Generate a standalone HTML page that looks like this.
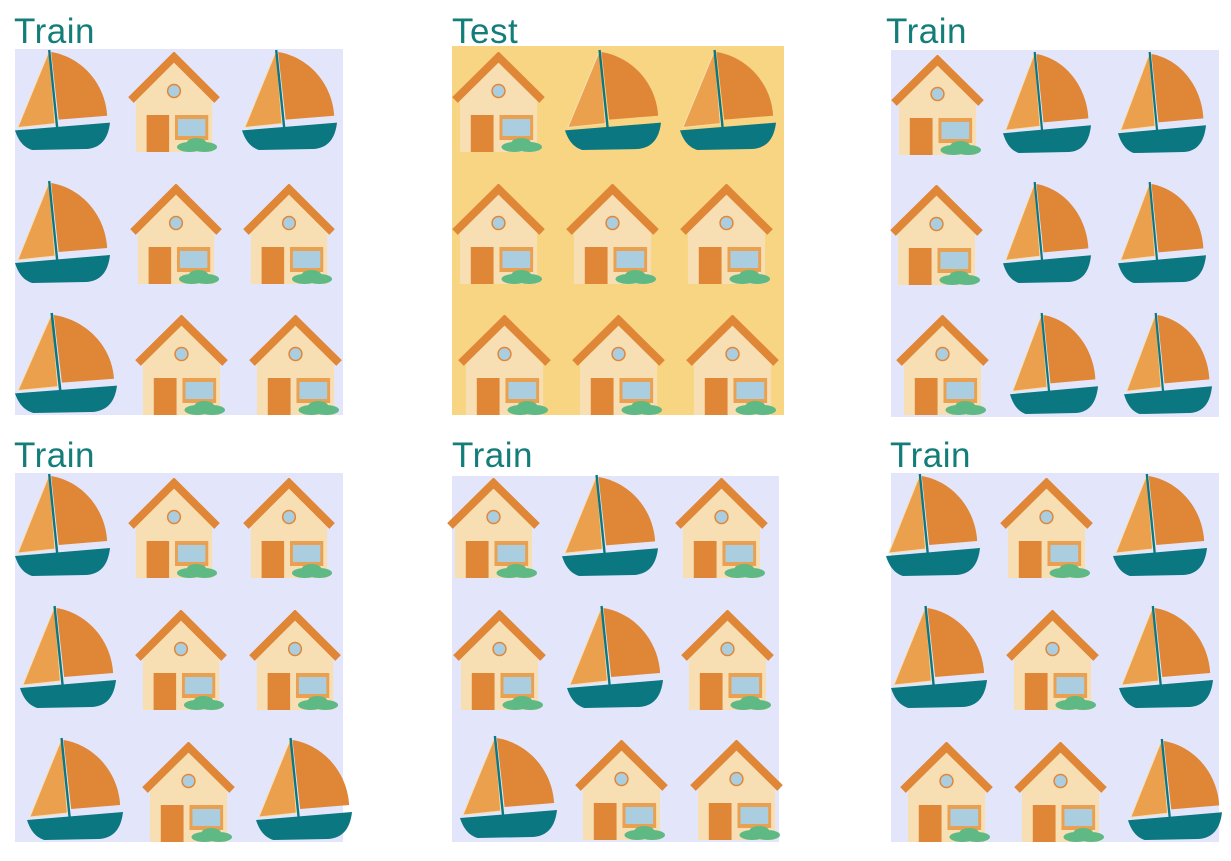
<!DOCTYPE html>
<html><head><meta charset="utf-8"><style>
body{margin:0;width:1231px;height:861px;background:#fff;position:relative;overflow:hidden;font-family:"Liberation Sans",sans-serif}
.p{position:absolute;background:#e3e6fb}
.t{position:absolute;color:#137d7a;font-size:35px;line-height:34px;letter-spacing:0.5px}
svg.i{position:absolute}
</style></head><body>
<svg width="0" height="0" style="position:absolute">
<defs>
<symbol id="boat" viewBox="0 0 100 105" preserveAspectRatio="none">
<path d="M36 2 L3 80 L42 76 Z" fill="#eaa04d" stroke="#f7dfb3" stroke-width="1"/>
<path d="M38 3 C70 8 95 35 97 68 L46 72 Z" fill="#e08637"/>
<path d="M36 1 L45 86" stroke="#0b7780" stroke-width="2.5" fill="none"/>
<path d="M0 83 L100 75 C98 92 90 101 75 102 L18 103 C8 100 3 92 0 83 Z" fill="#0b7780"/>
</symbol>
<symbol id="house" viewBox="0 0 95 100" preserveAspectRatio="none">
<path d="M8 46 L47 9 L86 46 L86 100 L8 100 Z" fill="#f7dfb3"/>
<path d="M3 48 L47 5 L91 48" fill="none" stroke="#e08637" stroke-width="8" stroke-linejoin="miter"/>
<circle cx="47" cy="39" r="6.5" fill="#aacde0" stroke="#e08637" stroke-width="1.5"/>
<rect x="19" y="63" width="23" height="37" fill="#e08637"/>
<rect x="48" y="63" width="34" height="25" fill="#e9a050"/>
<rect x="51" y="67" width="28" height="17" fill="#aacde0"/>
<ellipse cx="63" cy="95" rx="13" ry="5" fill="#5fb985"/>
<ellipse cx="78" cy="95" rx="13" ry="5" fill="#5fb985"/>
<ellipse cx="70" cy="91" rx="10" ry="5" fill="#5fb985"/>
</symbol>
</defs></svg>

<div class="t" style="left:14px;top:15px">Train</div>
<div class="t" style="left:452px;top:15px">Test</div>
<div class="t" style="left:886px;top:15px">Train</div>
<div class="t" style="left:14px;top:439px">Train</div>
<div class="t" style="left:452px;top:439px">Train</div>
<div class="t" style="left:890px;top:439px">Train</div>

<div class="p" style="left:15px;top:49px;width:328px;height:366px"></div>
<div class="p" style="left:452px;top:46px;width:332px;height:369px;background:#f8d583"></div>
<div class="p" style="left:891px;top:50px;width:328px;height:367px"></div>
<div class="p" style="left:15px;top:473px;width:328px;height:369px"></div>
<div class="p" style="left:452px;top:476px;width:327px;height:366px"></div>
<div class="p" style="left:891px;top:473px;width:328px;height:369px"></div>

<!-- panel1 -->
<svg class="i" style="left:15px;top:49px" width="95" height="103"><use href="#boat"/></svg>
<svg class="i" style="left:128px;top:52px" width="93" height="100"><use href="#house"/></svg>
<svg class="i" style="left:242px;top:49px" width="95" height="103"><use href="#boat"/></svg>
<svg class="i" style="left:15px;top:180px" width="95" height="105"><use href="#boat"/></svg>
<svg class="i" style="left:130px;top:184px" width="93" height="100"><use href="#house"/></svg>
<svg class="i" style="left:243px;top:184px" width="93" height="100"><use href="#house"/></svg>
<svg class="i" style="left:15px;top:312px" width="102" height="103"><use href="#boat"/></svg>
<svg class="i" style="left:135px;top:315px" width="94" height="100"><use href="#house"/></svg>
<svg class="i" style="left:249px;top:315px" width="94" height="100"><use href="#house"/></svg>

<!-- panel2 -->
<svg class="i" style="left:452px;top:52px" width="94" height="100"><use href="#house"/></svg>
<svg class="i" style="left:565px;top:49px" width="96" height="103"><use href="#boat"/></svg>
<svg class="i" style="left:680px;top:49px" width="96" height="103"><use href="#boat"/></svg>
<svg class="i" style="left:452px;top:184px" width="94" height="100"><use href="#house"/></svg>
<svg class="i" style="left:566px;top:184px" width="94" height="100"><use href="#house"/></svg>
<svg class="i" style="left:680px;top:184px" width="94" height="100"><use href="#house"/></svg>
<svg class="i" style="left:458px;top:315px" width="94" height="100"><use href="#house"/></svg>
<svg class="i" style="left:572px;top:315px" width="94" height="100"><use href="#house"/></svg>
<svg class="i" style="left:686px;top:315px" width="94" height="100"><use href="#house"/></svg>

<!-- panel3 -->
<svg class="i" style="left:891px;top:55px" width="94" height="100"><use href="#house"/></svg>
<svg class="i" style="left:1003px;top:51px" width="88" height="104"><use href="#boat"/></svg>
<svg class="i" style="left:1118px;top:51px" width="88" height="104"><use href="#boat"/></svg>
<svg class="i" style="left:890px;top:185px" width="94" height="100"><use href="#house"/></svg>
<svg class="i" style="left:1003px;top:181px" width="88" height="104"><use href="#boat"/></svg>
<svg class="i" style="left:1118px;top:181px" width="88" height="104"><use href="#boat"/></svg>
<svg class="i" style="left:896px;top:315px" width="94" height="100"><use href="#house"/></svg>
<svg class="i" style="left:1010px;top:312px" width="88" height="104"><use href="#boat"/></svg>
<svg class="i" style="left:1124px;top:312px" width="88" height="104"><use href="#boat"/></svg>

<!-- panel4 -->
<svg class="i" style="left:15px;top:473px" width="95" height="105"><use href="#boat"/></svg>
<svg class="i" style="left:128px;top:478px" width="93" height="100"><use href="#house"/></svg>
<svg class="i" style="left:243px;top:478px" width="93" height="100"><use href="#house"/></svg>
<svg class="i" style="left:20px;top:605px" width="96" height="105"><use href="#boat"/></svg>
<svg class="i" style="left:135px;top:610px" width="93" height="100"><use href="#house"/></svg>
<svg class="i" style="left:249px;top:610px" width="93" height="100"><use href="#house"/></svg>
<svg class="i" style="left:27px;top:737px" width="96" height="105"><use href="#boat"/></svg>
<svg class="i" style="left:142px;top:742px" width="94" height="100"><use href="#house"/></svg>
<svg class="i" style="left:256px;top:737px" width="96" height="105"><use href="#boat"/></svg>

<!-- panel5 -->
<svg class="i" style="left:447px;top:478px" width="94" height="100"><use href="#house"/></svg>
<svg class="i" style="left:562px;top:474px" width="96" height="104"><use href="#boat"/></svg>
<svg class="i" style="left:675px;top:478px" width="94" height="100"><use href="#house"/></svg>
<svg class="i" style="left:453px;top:610px" width="94" height="100"><use href="#house"/></svg>
<svg class="i" style="left:567px;top:605px" width="96" height="105"><use href="#boat"/></svg>
<svg class="i" style="left:681px;top:610px" width="94" height="100"><use href="#house"/></svg>
<svg class="i" style="left:460px;top:735px" width="97" height="105"><use href="#boat"/></svg>
<svg class="i" style="left:575px;top:740px" width="94" height="100"><use href="#house"/></svg>
<svg class="i" style="left:690px;top:740px" width="94" height="100"><use href="#house"/></svg>

<!-- panel6 -->
<svg class="i" style="left:886px;top:473px" width="94" height="105"><use href="#boat"/></svg>
<svg class="i" style="left:1000px;top:478px" width="94" height="100"><use href="#house"/></svg>
<svg class="i" style="left:1113px;top:473px" width="94" height="105"><use href="#boat"/></svg>
<svg class="i" style="left:891px;top:605px" width="96" height="105"><use href="#boat"/></svg>
<svg class="i" style="left:1006px;top:610px" width="94" height="100"><use href="#house"/></svg>
<svg class="i" style="left:1119px;top:605px" width="94" height="105"><use href="#boat"/></svg>
<svg class="i" style="left:900px;top:742px" width="94" height="100"><use href="#house"/></svg>
<svg class="i" style="left:1014px;top:742px" width="94" height="100"><use href="#house"/></svg>
<svg class="i" style="left:1128px;top:738px" width="94" height="104"><use href="#boat"/></svg>
</body></html>
